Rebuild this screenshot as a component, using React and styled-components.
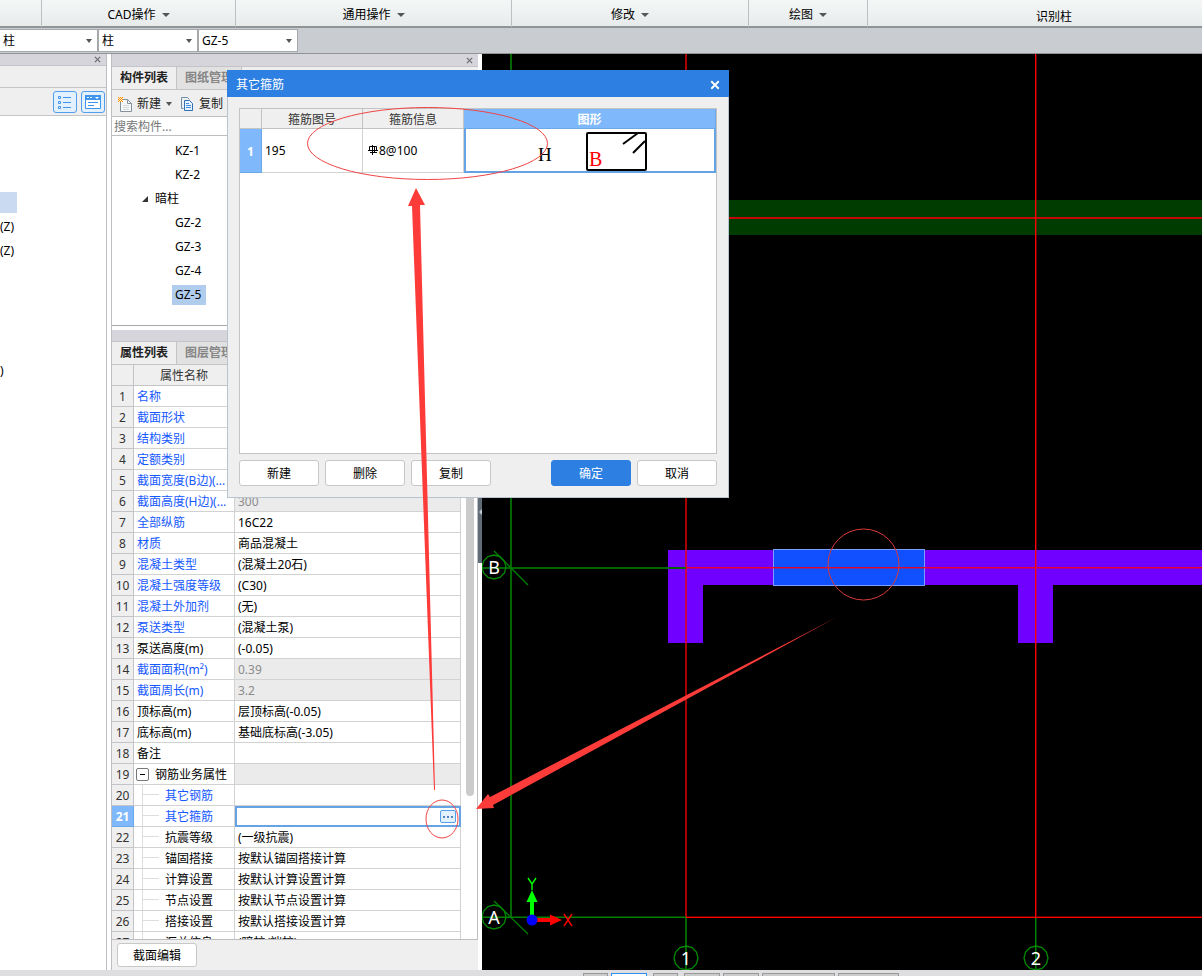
import React, { useState } from 'react'
import styled, { createGlobalStyle, css } from 'styled-components'

const GlobalStyle = createGlobalStyle`
  * {
    box-sizing: border-box;
  }

  body {
    margin: 0;
    overflow: hidden;
    background: #fff;
    color: #000;
  }

  body, button, input, select, table {
    font-family: "Noto Sans", "Noto Sans CJK SC", sans-serif;
    font-size: 12px;
    line-height: 20px;
  }

  button {
    padding: 0;
    cursor: pointer;
  }
`

const PageStyled = styled.div`
  position: relative;
  display: flex;
  flex-direction: column;
  height: 100vh;
  overflow: hidden;
`

/* ---------- ribbon ---------- */

const RibbonStyled = styled.nav`
  display: grid;
  grid-template-columns: 42px 194px 276px 237px 119px 1fr;
  height: 28px;
  flex: none;
  padding-bottom: 3px;
  background: linear-gradient(#f5f7f7, #e7ebeb);
  border-bottom: 2px solid #8f9496;
`

const RibbonGroupStyled = styled.div`
  display: flex;
  align-items: center;
  justify-content: center;
  border-right: ${({ $last }) => ($last ? 'none' : '1px solid #bcc0c1')};
  padding-left: ${({ $last }) => ($last ? '38px' : '0')};
  padding-top: ${({ $last }) => ($last ? '7px' : '3px')};
`

const RibbonButtonStyled = styled.button`
  display: flex;
  align-items: center;
  gap: 6px;
  border: none;
  background: none;
  white-space: nowrap;
`

/* ---------- filter bar ---------- */

const FilterBarStyled = styled.div`
  display: flex;
  flex: none;
  height: 26px;
  padding: 1px 0;
  background: #c9cdd1;
  border-bottom: 1px solid #8f9496;
`

const SelectWrapStyled = styled.label`
  position: relative;
  width: ${({ $width }) => $width}px;
  background: #fff;
  border: 1px solid #a6a8aa;
  border-left-width: ${({ $first }) => ($first ? 0 : 1)}px;

  select {
    width: 100%;
    height: 100%;
    padding: 0 3px;
    border: none;
    background: none;
    appearance: none;
    outline: none;
  }

  svg {
    position: absolute;
    right: 5px;
    top: 9px;
    pointer-events: none;
  }
`

/* ---------- workspace ---------- */

const WorkspaceStyled = styled.main`
  display: grid;
  grid-template-columns: 107px 371px 4px 1fr;
  flex: 1;
  min-height: 0;
`

const NavPanelStyled = styled.aside`
  display: flex;
  flex-direction: column;
  border-right: 1px solid #bdbdc2;
  overflow: hidden;
`

const PanelHeaderStyled = styled.header`
  display: flex;
  align-items: center;
  justify-content: flex-end;
  flex: none;
  height: ${({ $height }) => $height || 12}px;
  padding-right: 5px;
  background: #d5d5db;
  border-bottom: 1px solid #c3c3c8;
`

const CloseButtonStyled = styled.button`
  display: flex;
  border: none;
  background: none;
  color: ${({ $color }) => $color || '#6e6e72'};
`

const NavStripStyled = styled.div`
  flex: none;
  height: 22px;
  background: #efefef;
  border-bottom: 1px solid #c3c3c8;
`

const NavToolbarStyled = styled.div`
  display: flex;
  justify-content: flex-end;
  align-items: center;
  gap: 4px;
  flex: none;
  height: 28px;
  padding-right: 1px;
  background: #efefef;
  border-bottom: 1px solid #c3c3c8;
`

const ViewButtonStyled = styled.button`
  display: flex;
  align-items: center;
  justify-content: center;
  width: 24px;
  height: 22px;
  border: 1px solid #4f9fee;
  border-radius: 3px;
  background: #e3f0fd;
`

const NavTreeStyled = styled.ul`
  list-style: none;
  margin: 0;
  padding: 74px 0 0;

  li {
    display: flex;
    align-items: center;
    height: 24px;
    padding-top: 2px;
  }
`

const NavSelectedStyled = styled.span`
  width: 17px;
  height: 21px;
  margin-bottom: 2px;
  background: #c9daf1;
`

const PropsPanelStyled = styled.section`
  display: flex;
  flex-direction: column;
  min-height: 0;
  min-width: 0;
  margin-left: 4px;
  border-left: 1px solid #bdbdc2;
`

const TabsStyled = styled.div`
  display: flex;
  flex: none;
  height: 23px;
  background: #efefef;
  border-bottom: 1px solid #c3c3c8;
`

const TabStyled = styled.button`
  width: 65px;
  border: none;
  border-right: 1px solid #c3c3c8;
  background: ${({ $active }) => ($active ? '#efefef' : '#e1e1e1')};
  color: ${({ $active }) => ($active ? '#222' : '#858585')};
  font-weight: bold;
  white-space: nowrap;
`

const ToolbarStyled = styled.div`
  display: flex;
  align-items: center;
  gap: 9px;
  flex: none;
  height: 26px;
  padding: 2px 0 0 6px;
  background: #efefef;
`

const ToolButtonStyled = styled.button`
  display: flex;
  align-items: center;
  gap: 5px;
  border: none;
  background: none;
  color: #222;
`

const SearchStyled = styled.input`
  flex: none;
  height: 20px;
  padding: 1px 2px 0;
  border: solid #bdbdc2;
  border-width: 1px 0;
  outline: none;

  &::placeholder {
    color: #777;
  }
`

const ComponentTreeStyled = styled.ul`
  list-style: none;
  flex: none;
  height: 190px;
  margin: 0 0 4px;
  padding: 3px 0 0;
  border-bottom: 1px solid #a9a9ad;
`

const TreeItemStyled = styled.li`
  display: flex;
  align-items: center;
  gap: 4px;
  height: 24px;
  padding-left: ${({ $leaf }) => ($leaf ? 60 : 30)}px;

  span {
    padding: 0 5px 0 3px;
    background: ${({ $selected }) => ($selected ? '#b1cdee' : 'none')};
  }
`

/* ---------- property table ---------- */

const ScrollAreaStyled = styled.div`
  display: flex;
  flex: 1;
  min-height: 0;
  overflow: hidden;
  border-right: 1px solid #bdbdc2;
  border-bottom: 1px solid #bdbdc2;
`

const TableHolderStyled = styled.div`
  flex: 1;
  min-width: 0;
`

const ScrollTrackStyled = styled.div`
  flex: none;
  width: 16px;
  padding: 21px 3px 0 5px;
`

const ScrollThumbStyled = styled.div`
  height: 410px;
  border-radius: 4px;
  background: #cbcbcb;
`

const PropTableStyled = styled.table`
  width: 100%;
  table-layout: fixed;
  border-collapse: separate;
  border-spacing: 0;

  th, td {
    height: 21px;
    padding: 1px 3px 0;
    border-right: 1px solid #d2d2d2;
    border-bottom: 1px solid #d2d2d2;
    font-weight: normal;
    line-height: 19px;
    text-align: left;
    white-space: nowrap;
    overflow: hidden;
  }

  thead th {
    background: #efefef;
    color: #333;
    text-align: center;
    border-color: #c3c3c8;
  }

  tbody th {
    padding: 1px 0 0;
    text-align: center;
    background: #efefef;
    color: #333;
    border-color: #c3c3c8;
  }
`

const PropRowStyled = styled.tr`
  ${({ $selected }) => $selected && css`
    && th {
      background: #80b9fb;
      border-color: #6aa8e8;
      color: #fff;
      font-weight: bold;
    }

    && td:last-child {
      padding: 0;
      border: none;
    }
  `}
`

const NameCellStyled = styled.td`
  color: ${({ $link }) => ($link ? '#1558ff' : '#000')};

  && {
    padding: 0 0 0 2px;
  }
`

const NameInnerStyled = styled.div`
  display: flex;
  align-items: center;
  gap: 6px;
  height: 20px;
  padding: ${({ $plain }) => ($plain ? '1px 0 0 1px' : 0)};
`

const GuideStyled = styled.span`
  width: 17px;
  height: 20px;
  margin-left: 6px;
  border-left: 1px solid #dedede;
  background: linear-gradient(#dedede, #dedede) 0 9px / 100% 1px no-repeat;
`

const ExpanderStyled = styled.button`
  display: flex;
  align-items: center;
  justify-content: center;
  width: 13px;
  height: 13px;
  border: 1px solid #777;
  border-radius: 2px;
  background: #fff;
`

const ValueCellStyled = styled.td`
  background: ${({ $readonly }) => ($readonly ? '#ebebeb' : '#fff')};
  color: ${({ $readonly }) => ($readonly ? '#8c8c8c' : '#000')};
`

const EditorStyled = styled.div`
  display: flex;
  align-items: center;
  height: 21px;
  padding-right: 3px;
  border: 2px solid #65a3e4;

  input {
    flex: 1;
    min-width: 0;
    height: 16px;
    padding: 0 1px;
    border: none;
    outline: none;
  }
`

const MoreButtonStyled = styled.button`
  display: flex;
  align-items: center;
  justify-content: center;
  width: 16px;
  height: 13px;
  border: 1px solid #4f9fee;
  border-radius: 2px;
  background: #e3f0fd;
`

const PanelFooterStyled = styled.footer`
  display: flex;
  align-items: center;
  flex: none;
  height: 30px;
  padding-left: 5px;
  background: #efefef;
`

const ButtonStyled = styled.button`
  width: 80px;
  height: ${({ $small }) => ($small ? 24 : 26)}px;
  padding-top: 2px;
  border: 1px solid ${({ $primary }) => ($primary ? '#2d80e2' : '#c8c8c8')};
  border-radius: 3px;
  background: ${({ $primary }) => ($primary ? '#2d80e2' : '#fff')};
  color: ${({ $primary }) => ($primary ? '#fff' : '#000')};
`

const SplitterStyled = styled.div`
  display: flex;
  align-items: center;
`

const SplitterHandleStyled = styled.button`
  display: flex;
  align-items: center;
  width: 4px;
  height: 102px;
  border: none;
  background: #5f6b77;
`

const CanvasStyled = styled.div`
  min-width: 0;
  background: #000;
  overflow: hidden;

  svg {
    display: block;
    width: 100%;
    height: 100%;
  }
`

/* ---------- status bar ---------- */

const StatusBarStyled = styled.footer`
  display: flex;
  gap: 3px;
  flex: none;
  height: 6px;
  padding: 3px 0 0 583px;
  background: #dedee0;
  overflow: hidden;
`

const StatusButtonStyled = styled.button`
  width: ${({ $width }) => $width}px;
  height: 20px;
  margin-right: ${({ $spaced }) => ($spaced ? 3 : 0)}px;
  border: 1px solid ${({ $active }) => ($active ? '#2d90f0' : '#999')};
  background: ${({ $active }) => ($active ? '#fff' : '#ccc')};
`

/* ---------- dialog ---------- */

const DialogStyled = styled.div`
  position: absolute;
  left: 227px;
  top: 70px;
  display: flex;
  flex-direction: column;
  width: 502px;
  height: 428px;
  background: #efefef;
  border: 1px solid #bac4d0;
  border-top: none;
`

const DialogTitleStyled = styled.header`
  display: flex;
  align-items: center;
  justify-content: space-between;
  flex: none;
  height: 27px;
  margin: 0 -1px;
  padding: 2px 9px 0;
  background: #2d80e2;
  color: #fff;
`

const DialogBodyStyled = styled.div`
  display: flex;
  flex-direction: column;
  gap: 6px;
  flex: 1;
  padding: 11px;
`

const DialogTableHolderStyled = styled.div`
  flex: 1;
  border: 1px solid #c3c3c3;
  background: #fff;
`

const DialogTableStyled = styled.table`
  width: 100%;
  table-layout: fixed;
  border-collapse: separate;
  border-spacing: 0;

  th, td {
    padding: 0 3px;
    border-right: 1px solid #d2d2d2;
    border-bottom: 1px solid #d2d2d2;
    font-weight: normal;
  }

  th {
    height: 20px;
    line-height: 17px;
    padding: 2px 0 0;
    background: #efefef;
    color: #333;
    border-color: #c3c3c3;
  }

  td {
    height: 44px;
  }

  && .active {
    background: #80b9fb;
    border-color: #6aa8e8;
    color: #fff;
    font-weight: bold;
  }
`

const ShapeCellStyled = styled.td`
  && {
    padding: 0;
    border: 2px solid #65a3e4;
    border-top: none;
  }

  svg {
    display: block;
    margin: 0 auto;
  }
`

const RebarInfoStyled = styled.span`
  display: flex;
  align-items: center;
  gap: 1px;
  padding-left: 2px;
`

const DialogActionsStyled = styled.div`
  display: flex;
  gap: 6px;
`

const SpacerStyled = styled.span`
  flex: 1;
`

const MarkupStyled = styled.svg`
  position: absolute;
  left: 0;
  top: 0;
  width: 100%;
  height: 100%;
  pointer-events: none;
`

const ribbonGroups = ['', 'CAD操作', '通用操作', '修改', '绘图', '识别柱']

const treeItems = [
  { label: 'KZ-1', leaf: true },
  { label: 'KZ-2', leaf: true },
  { label: '暗柱', leaf: false },
  { label: 'GZ-2', leaf: true },
  { label: 'GZ-3', leaf: true },
  { label: 'GZ-4', leaf: true },
  { label: 'GZ-5', leaf: true },
]

const properties = [
  { name: '名称', link: true },
  { name: '截面形状', link: true },
  { name: '结构类别', link: true },
  { name: '定额类别', link: true },
  { name: '截面宽度(B边)(...', link: true },
  { name: '截面高度(H边)(...', value: '300', link: true, readonly: true },
  { name: '全部纵筋', value: '16C22', link: true },
  { name: '材质', value: '商品混凝土', link: true },
  { name: '混凝土类型', value: '(混凝土20石)', link: true },
  { name: '混凝土强度等级', value: '(C30)', link: true },
  { name: '混凝土外加剂', value: '(无)', link: true },
  { name: '泵送类型', value: '(混凝土泵)', link: true },
  { name: '泵送高度(m)', value: '(-0.05)' },
  { name: '截面面积(m²)', value: '0.39', link: true, readonly: true },
  { name: '截面周长(m)', value: '3.2', link: true, readonly: true },
  { name: '顶标高(m)', value: '层顶标高(-0.05)' },
  { name: '底标高(m)', value: '基础底标高(-3.05)' },
  { name: '备注' },
  { name: '钢筋业务属性', group: true, readonly: true },
  { name: '其它钢筋', link: true, child: true },
  { name: '其它箍筋', link: true, child: true, editing: true },
  { name: '抗震等级', value: '(一级抗震)', child: true },
  { name: '锚固搭接', value: '按默认锚固搭接计算', child: true },
  { name: '计算设置', value: '按默认计算设置计算', child: true },
  { name: '节点设置', value: '按默认节点设置计算', child: true },
  { name: '搭接设置', value: '按默认搭接设置计算', child: true },
  { name: '汇总信息', value: '(暗柱/端柱)', child: true },
]

const statusButtons = [
  { width: 25 },
  { width: 36, active: true, spaced: true },
  { width: 25, spaced: true },
  { width: 36 },
  { width: 36 },
  { width: 73 },
  { width: 61 },
]

const Caret = ({ width = 8 }) => (
  <svg width={width} height="4" viewBox="0 0 8 4" preserveAspectRatio="none">
    <path d="M0 0h8L4 4z" fill="#555" />
  </svg>
)

const Cross = ({ size = 7 }) => (
  <svg width={size} height={size} viewBox="0 0 8 8">
    <path d="M1 1l6 6M7 1L1 7" stroke="currentColor" strokeWidth="1.5" />
  </svg>
)

const ListIcon = () => (
  <svg width="14" height="14" viewBox="0 0 14 14" fill="none" stroke="#3f95ec">
    <path d="M5 2.5h8M5 7.5h8M5 12.5h8" />
    <path d="M.5 1.5h2v2h-2zM.5 6.5h2v2h-2zM.5 11.5h2v2h-2z" />
  </svg>
)

const CardIcon = () => (
  <svg width="16" height="14" viewBox="0 0 16 14">
    <path d="M.5.5h15v13H.5z" fill="#fff" stroke="#3f95ec" />
    <path d="M0 0h16v5H0z" fill="#3f95ec" />
    <path d="M2 2h2v1H2zM5 2h2v1H5zM10 2h4l-2 2z" fill="#fff" />
    <path d="M3 7.5h10M3 10.5h6" stroke="#3f95ec" />
  </svg>
)

const NewIcon = () => (
  <svg width="14" height="15" viewBox="0 0 14 15">
    <path d="M2.500 2.500h7l4 4v8h-11z" fill="#f6f8f9" stroke="#85919a" />
    <path d="M9.500 2.500v4h4" fill="none" stroke="#85919a" />
    <path d="M5 8.500h6M5 10.500h6M5 12.500h6" stroke="#d3d8db" />
    <path d="M0 0h5v5H0z" fill="#fff0d0" />
    <path d="M0 0h1v1H0zM2 0h1v1H2zM4 0h1v1H4zM1 1h1v1H1zM3 1h1v1H3zM0 2h1v1H0zM2 2h1v1H2zM4 2h1v1H4zM1 3h1v1H1zM3 3h1v1H3zM0 4h1v1H0zM2 4h1v1H2zM4 4h1v1H4z" fill="#f28a00" />
  </svg>
)

const CopyIcon = () => (
  <svg width="13" height="15" viewBox="0 0 13 15" fill="none" stroke="#2f6fb5">
    <path d="M2.500 11.500h-2v-11h6l2 2" stroke="#6f8ca8" />
    <path d="M3.500 3.500h5l3 3v7h-8z" fill="#e8f3ff" />
    <path d="M5 6.500h3M5 8.500h5M5 10.500h5" stroke="#3f8de0" />
  </svg>
)

const RebarIcon = () => (
  <svg width="10" height="11" viewBox="0 0 10 11" fill="none" stroke="#000">
    <path d="M4.500 0v10M1.500 1.500h7M1.500 1.500v4M8.500 1.500v4M0 5.500h10M2 7.500h7M6.500 2v6" />
  </svg>
)

const StirrupShape = () => (
  <svg width="140" height="42" viewBox="0 0 140 42">
    <text x="18" y="32" fontFamily="Liberation Serif, serif" fontSize="19">H</text>
    <rect x="67" y="4" width="59" height="37" rx="1" fill="none" stroke="#000" strokeWidth="2" />
    <path d="M103 15l15-11M113 24l12-12" stroke="#000" strokeWidth="2" />
    <text x="69" y="37" fill="#f00" fontFamily="Liberation Serif, serif" fontSize="20">B</text>
  </svg>
)

const AxisBubble = ({ x, y, label }) => {
  const points = Array.from({ length: 12 }, (_, i) => {
    const angle = (Math.PI / 6) * i
    return `${x + 12 * Math.cos(angle)},${y + 12 * Math.sin(angle)}`
  }).join(' ')
  return (
    <g>
      <polygon points={points} fill="none" stroke="#008a00" strokeWidth="1.3" />
      <text x={x} y={y + 7} fill="#fff" fontSize="18" textAnchor="middle">{label}</text>
    </g>
  )
}

// drawing coordinates are window coordinates, shifted to the canvas origin
const PlanDrawing = () => (
  <svg role="img" aria-label="CAD">
    <g transform="translate(-482 -54)">
      <rect x="482" y="200" width="2000" height="35" fill="#003b00" />
      <path d="M668 550H2482V585H1053V643H1018V585H703V643H668z" fill="#7000ff" />
      <rect x="773.500" y="549.500" width="151" height="36" fill="#1050ff" stroke="#7aa0ff" />
      <g fill="none">
        <path d="M482 218H2482" stroke="#c00808" strokeWidth="2" />
        <path d="M686 54V917" stroke="#f00000" strokeWidth="2" opacity=".7" />
        <path d="M1036 54V917M686 917H2482M686 568H2482" stroke="#f00" strokeWidth="2" opacity=".4" />
        <path d="M1035.500 54V917M686 917.500H2482" stroke="#f00" />
        <path d="M686 567.500H2482" stroke="#f00020" opacity=".9" />
        <path d="M511 54V917" stroke="#006400" strokeWidth="2" />
        <path d="M482 568H686" stroke="#006400" strokeWidth="2" />
        <path d="M482 917H686M1036 918V970" stroke="#008000" strokeWidth="2" opacity=".5" />
        <path d="M482 917.500H686M1035.500 918V970" stroke="#008000" />
        <path d="M686 918V970" stroke="#006400" strokeWidth="2" />
        <path d="M494 551L528 585M494 901L528 934" stroke="#008000" strokeWidth="1.3" />
      </g>
      <AxisBubble x={494} y={567} label="B" />
      <AxisBubble x={494} y={917} label="A" />
      <AxisBubble x={686} y={958} label="1" />
      <AxisBubble x={1036} y={958} label="2" />
      <path d="M530 917V902H526.500L532 890L537.500 902H534V917z" fill="#0f0" />
      <path d="M536 918H550V914.500L562 920L550 925.500V922H536z" fill="#f00" />
      <circle cx="532" cy="920" r="5.500" fill="#00f" />
      <path d="M528 878l4 6v6m0-6l4-6" stroke="#0f0" strokeWidth="1.4" fill="none" />
      <path d="M564 914l8 12m0-12l-8 12" stroke="#f00" strokeWidth="1.4" fill="none" />
    </g>
  </svg>
)

const Markup = () => (
  <MarkupStyled aria-hidden="true">
    <defs>
      <linearGradient id="fade" x1="1" x2="0" y1="0" y2="0">
        <stop offset="0" stopColor="#fd3b39" stopOpacity=".7" />
        <stop offset=".2" stopColor="#fd3b39" />
      </linearGradient>
    </defs>
    <g fill="none" stroke="#f04444">
      <ellipse cx="427.500" cy="143.500" rx="120" ry="36" />
      <ellipse cx="442" cy="819" rx="16" ry="19" />
      <circle cx="863.500" cy="564.500" r="35.500" stroke="#d83a3a" />
    </g>
    <path d="M416 188L425 205L420 205L435 790H434L412 206L408 206z" fill="#fd3b39" />
    <path d="M476 809L488 794L490 797L838 616.500L493 805L494 808z" fill="url(#fade)" />
  </MarkupStyled>
)

const PropertyRow = ({ index, item, stirrup, setStirrup }) => (
  <PropRowStyled $selected={item.editing}>
    <th scope="row">{index}</th>
    <NameCellStyled $link={item.link}>
      <NameInnerStyled $plain={!item.child && !item.group}>
        {item.child && <GuideStyled />}
        {item.group && (
          <ExpanderStyled aria-label={item.name}>
            <svg width="5" height="1"><path d="M0 .5h5" stroke="#000" /></svg>
          </ExpanderStyled>
        )}
        {item.name}
      </NameInnerStyled>
    </NameCellStyled>
    <ValueCellStyled $readonly={item.readonly}>
      {item.editing ? (
        <EditorStyled>
          <input
            aria-label={item.name}
            value={stirrup}
            onChange={(e) => setStirrup(e.target.value)}
          />
          <MoreButtonStyled aria-label={item.name}>
            <svg width="10" height="2"><path d="M0 0h2v2H0zM4 0h2v2H4zM8 0h2v2H8z" fill="#4f86c0" /></svg>
          </MoreButtonStyled>
        </EditorStyled>
      ) : item.value}
    </ValueCellStyled>
  </PropRowStyled>
)

const StirrupDialog = () => (
  <DialogStyled role="dialog" aria-labelledby="dialog-title">
    <DialogTitleStyled>
      <span id="dialog-title">其它箍筋</span>
      <CloseButtonStyled $color="#fff" aria-label="关闭"><Cross size={10} /></CloseButtonStyled>
    </DialogTitleStyled>
    <DialogBodyStyled>
      <DialogTableHolderStyled>
        <DialogTableStyled>
          <colgroup>
            <col style={{ width: 22 }} />
            <col style={{ width: 101 }} />
            <col style={{ width: 101 }} />
            <col />
          </colgroup>
          <thead>
            <tr>
              <th />
              <th>箍筋图号</th>
              <th>箍筋信息</th>
              <th className="active">图形</th>
            </tr>
          </thead>
          <tbody>
            <tr>
              <th className="active" scope="row">1</th>
              <td>195</td>
              <td><RebarInfoStyled><RebarIcon />8@100</RebarInfoStyled></td>
              <ShapeCellStyled><StirrupShape /></ShapeCellStyled>
            </tr>
          </tbody>
        </DialogTableStyled>
      </DialogTableHolderStyled>
      <DialogActionsStyled>
        <ButtonStyled>新建</ButtonStyled>
        <ButtonStyled>删除</ButtonStyled>
        <ButtonStyled>复制</ButtonStyled>
        <SpacerStyled />
        <ButtonStyled $primary>确定</ButtonStyled>
        <ButtonStyled>取消</ButtonStyled>
      </DialogActionsStyled>
    </DialogBodyStyled>
  </DialogStyled>
)

const App = () => {
  const [selected, setSelected] = useState('GZ-5')
  const [search, setSearch] = useState('')
  const [stirrup, setStirrup] = useState('')

  return (
    <PageStyled>
      <GlobalStyle />
      <RibbonStyled>
        {ribbonGroups.map((label, i) => (
          <RibbonGroupStyled key={i} $last={i === ribbonGroups.length - 1}>
            {label && (
              <RibbonButtonStyled>
                {label}
                {i < ribbonGroups.length - 1 && <Caret />}
              </RibbonButtonStyled>
            )}
          </RibbonGroupStyled>
        ))}
      </RibbonStyled>

      <FilterBarStyled>
        {['柱', '柱', 'GZ-5'].map((value, i) => (
          <SelectWrapStyled key={i} $width={i === 0 ? 98 : 100} $first={i === 0}>
            <select aria-label={value} defaultValue={value}>
              <option>{value}</option>
            </select>
            <Caret width={6} />
          </SelectWrapStyled>
        ))}
      </FilterBarStyled>

      <WorkspaceStyled>
        <NavPanelStyled>
          <PanelHeaderStyled>
            <CloseButtonStyled aria-label="关闭"><Cross /></CloseButtonStyled>
          </PanelHeaderStyled>
          <NavStripStyled />
          <NavToolbarStyled>
            <ViewButtonStyled aria-label="列表"><ListIcon /></ViewButtonStyled>
            <ViewButtonStyled aria-label="卡片"><CardIcon /></ViewButtonStyled>
          </NavToolbarStyled>
          <NavTreeStyled>
            <li><NavSelectedStyled /></li>
            <li>(Z)</li>
            <li>(Z)</li>
            <li />
            <li />
            <li />
            <li />
            <li>)</li>
          </NavTreeStyled>
        </NavPanelStyled>

        <PropsPanelStyled>
          <PanelHeaderStyled $height={13}>
            <CloseButtonStyled aria-label="关闭"><Cross /></CloseButtonStyled>
          </PanelHeaderStyled>
          <TabsStyled>
            <TabStyled $active>构件列表</TabStyled>
            <TabStyled>图纸管理</TabStyled>
          </TabsStyled>
          <ToolbarStyled>
            <ToolButtonStyled><NewIcon />新建<Caret width={6} /></ToolButtonStyled>
            <ToolButtonStyled><CopyIcon />复制</ToolButtonStyled>
          </ToolbarStyled>
          <SearchStyled
            aria-label="搜索构件"
            placeholder="搜索构件..."
            value={search}
            onChange={(e) => setSearch(e.target.value)}
          />
          <ComponentTreeStyled>
            {treeItems.map((item) => (
              <TreeItemStyled
                key={item.label}
                $leaf={item.leaf}
                $selected={item.label === selected}
                onClick={() => item.leaf && setSelected(item.label)}
              >
                {!item.leaf && <svg width="6" height="6"><path d="M6 0v6H0z" fill="#333" /></svg>}
                <span>{item.label}</span>
              </TreeItemStyled>
            ))}
          </ComponentTreeStyled>

          <PanelHeaderStyled $height={12} />
          <TabsStyled>
            <TabStyled $active>属性列表</TabStyled>
            <TabStyled>图层管理</TabStyled>
          </TabsStyled>
          <ScrollAreaStyled>
            <TableHolderStyled>
              <PropTableStyled>
                <colgroup>
                  <col style={{ width: 22 }} />
                  <col style={{ width: 101 }} />
                  <col />
                </colgroup>
                <thead>
                  <tr>
                    <th />
                    <th>属性名称</th>
                    <th />
                  </tr>
                </thead>
                <tbody>
                  {properties.map((item, i) => (
                    <PropertyRow
                      key={item.name}
                      index={i + 1}
                      item={item}
                      stirrup={stirrup}
                      setStirrup={setStirrup}
                    />
                  ))}
                </tbody>
              </PropTableStyled>
            </TableHolderStyled>
            <ScrollTrackStyled><ScrollThumbStyled /></ScrollTrackStyled>
          </ScrollAreaStyled>
          <PanelFooterStyled>
            <ButtonStyled $small>截面编辑</ButtonStyled>
          </PanelFooterStyled>
        </PropsPanelStyled>

        <SplitterStyled>
          <SplitterHandleStyled aria-label="折叠">
            <svg width="4" height="6"><path d="M4 0v6L1 3z" fill="#c5cad0" /></svg>
          </SplitterHandleStyled>
        </SplitterStyled>

        <CanvasStyled><PlanDrawing /></CanvasStyled>
      </WorkspaceStyled>

      <StatusBarStyled>
        {statusButtons.map((item, i) => (
          <StatusButtonStyled
            key={i}
            aria-label={`状态 ${i + 1}`}
            $width={item.width}
            $active={item.active}
            $spaced={item.spaced}
          />
        ))}
      </StatusBarStyled>

      <StirrupDialog />
      <Markup />
    </PageStyled>
  )
}

export default App
